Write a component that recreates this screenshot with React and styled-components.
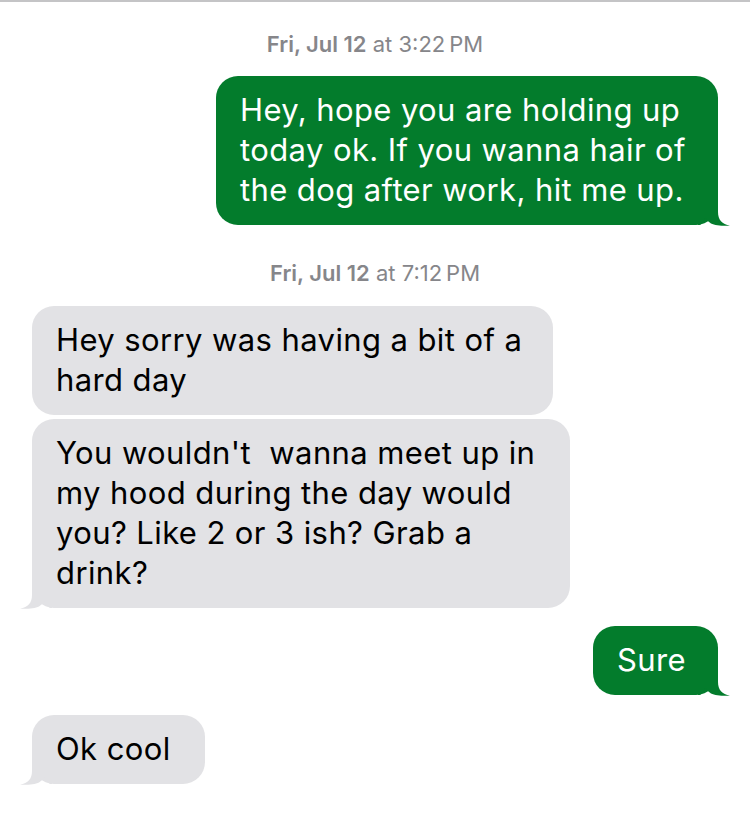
import React from "react";
import styled, { createGlobalStyle } from "styled-components";

const Global = createGlobalStyle`
  html, body { margin: 0; padding: 0; background: #ffffff; }
  body {
    font-family: Inter, "Noto Sans", "Liberation Sans", sans-serif;
    -webkit-font-smoothing: antialiased;
  }
`;

const GREEN = "#037c2c";
const GRAY = "#e2e2e5";

const Screen = styled.div`
  width: 750px;
  min-height: 813px;
  box-sizing: border-box;
  border-top: 2px solid #c4c4c6;
  display: flex;
  flex-direction: column;
  padding: 0 32px;
`;

const Stamp = styled.div`
  margin-top: ${(p) => p.$top}px;
  text-align: center;
  font-size: 22px;
  line-height: 24px;
  color: #86868a;
  b {
    font-weight: 600;
  }
`;

const Row = styled.div`
  display: flex;
  justify-content: ${(p) => (p.$sent ? "flex-end" : "flex-start")};
  margin-top: ${(p) => p.$top}px;
`;

const Bubble = styled.div`
  position: relative;
  box-sizing: border-box;
  width: ${(p) => p.$w}px;
  padding: 14px 0 15px 24px;
  border-radius: 22px;
  background: ${(p) => (p.$sent ? GREEN : GRAY)};
  color: ${(p) => (p.$sent ? "#ffffff" : "#000000")};
  font-size: 31px;
  line-height: 40px;
  letter-spacing: 0.4px;
  white-space: nowrap;
`;

const TailSvg = styled.svg`
  position: absolute;
  bottom: -2px;
  ${(p) => (p.$sent ? "right: -14px;" : "left: -14px; transform: scaleX(-1);")}
  width: 34px;
  height: 28px;
  overflow: visible;
`;

function Tail({ sent }) {
  return (
    <TailSvg $sent={sent} viewBox="-20 -26 34 28" aria-hidden="true">
      <path
        fill={sent ? GREEN : GRAY}
        d="M -20 -26 L 0 -26 L 0 -13 C 0 -5 4 -0.8 12 0.6 C 6 1.2 -3 0.4 -7 -1.6 Q -10.5 -3.5 -12.5 -7 Q -14.5 -2.5 -18 0 L -20 0 Z"
      />
    </TailSvg>
  );
}

function Message({ sent, top, w, tail, lines }) {
  return (
    <Row $sent={sent} $top={top}>
      <Bubble $sent={sent} $w={w}>
        {lines.map((l, i) => (
          <React.Fragment key={i}>
            {i > 0 && <br />}
            {l}
          </React.Fragment>
        ))}
        {tail && <Tail sent={sent} />}
      </Bubble>
    </Row>
  );
}

export default function App() {
  return (
    <>
      <Global />
      <Screen>
        <Stamp $top={30}>
          <b>Fri, Jul 12</b> at 3:22&#8201;PM
        </Stamp>
        <Message
          sent
          top={20}
          w={502}
          tail
          lines={[
            "Hey, hope you are holding up",
            "today ok. If you wanna hair of",
            "the dog after work, hit me up.",
          ]}
        />
        <Stamp $top={36}>
          <b>Fri, Jul 12</b> at 7:12&#8201;PM
        </Stamp>
        <Message
          top={21}
          w={521}
          lines={["Hey sorry was having a bit of a", "hard day"]}
        />
        <Message
          top={4}
          w={538}
          tail
          lines={[
            "You wouldn't\u00a0 wanna meet up in",
            "my hood during the day would",
            "you? Like 2 or 3 ish? Grab a",
            "drink?",
          ]}
        />
        <Message sent top={18} w={125} tail lines={["Sure"]} />
        <Message top={20} w={173} tail lines={["Ok cool"]} />
      </Screen>
    </>
  );
}
